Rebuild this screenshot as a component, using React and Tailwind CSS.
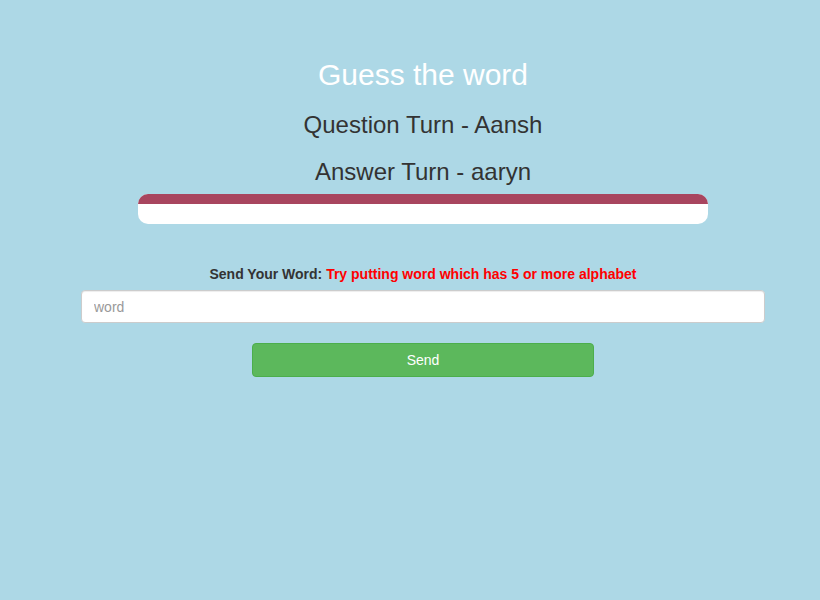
export default function App() {
  return (
    <div className="min-h-[600px] bg-[#add8e6] pl-[26px] text-[#333] font-['Liberation_Sans',Arial,sans-serif]">
      <div className="flex flex-col items-center pt-[58px]">
        <h2 className="text-[30px] leading-[34px] text-white">Guess the word</h2>
        <h3 className="mt-[19px] text-[24px] leading-[28px]">Question Turn - Aansh</h3>
        <h3 className="mt-[19px] text-[24px] leading-[28px]">Answer Turn - aaryn</h3>
        <div className="mt-[8px] h-[30px] w-[570px] overflow-hidden rounded-[10px] bg-white">
          <div className="h-[10px] w-full bg-[#a8455f]" />
        </div>
        <div className="mt-[40px] text-[14px] leading-[20px] font-bold">
          Send Your Word: <span className="text-[#ff0000]">Try putting word which has 5 or more alphabet</span>
        </div>
        <input
          type="text"
          placeholder="word"
          className="mt-[6px] h-[33px] w-[684px] rounded-[4px] border border-[#ccc] bg-white px-[12px] text-[14px] shadow-[inset_0_1px_1px_rgba(0,0,0,0.075)] outline-none placeholder:text-[#999]"
        />
        <button className="mt-[20px] h-[34px] w-[342px] rounded-[4px] border border-[#4cae4c] bg-[#5cb85c] text-[14px] text-white">
          Send
        </button>
      </div>
    </div>
  );
}
